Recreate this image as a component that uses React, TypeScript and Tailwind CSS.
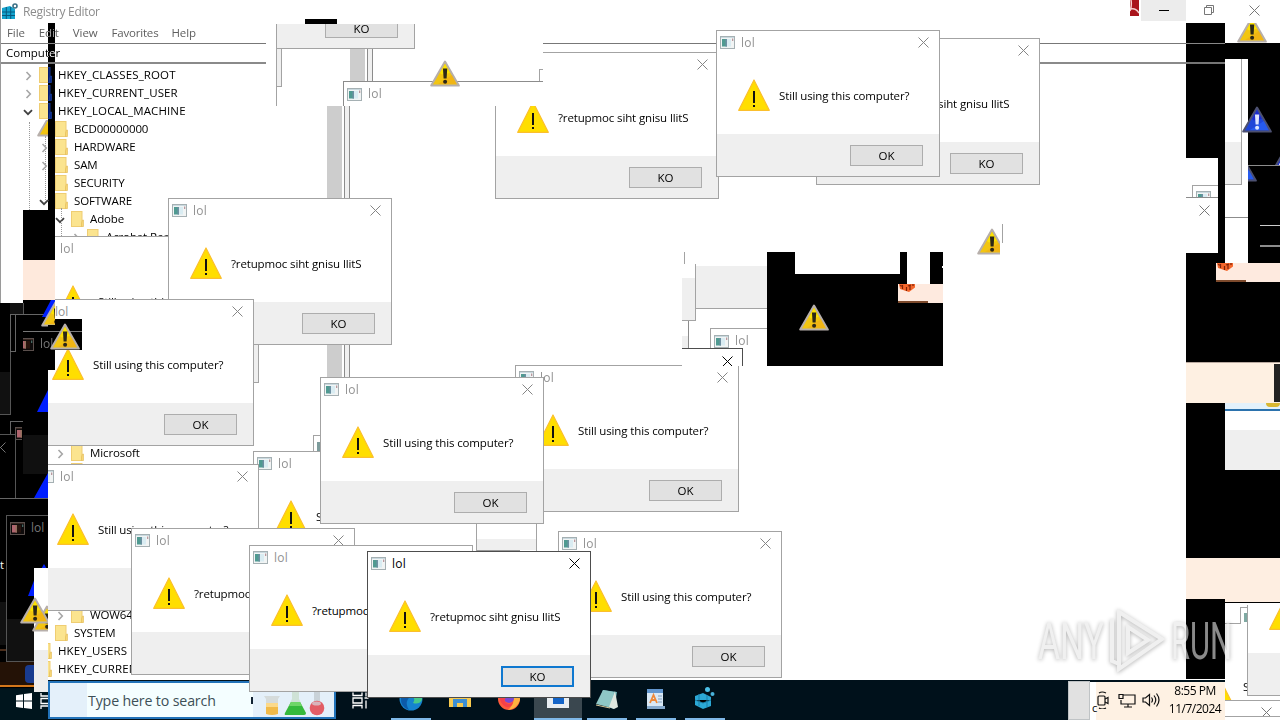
import type { ReactNode } from "react";
import { clsx } from "clsx";

const MESSAGE = "Still using this computer?";

interface DialogProps {
  /** Position classes, the dialog itself is always 224x147 */
  at: string;
  mirrored?: boolean;
  active?: boolean;
}

interface TreeItem {
  label: string;
  level: 0 | 1 | 2 | 3;
  chevron?: "open" | "closed";
  /** Extra space above the row, stands in for rows hidden by other windows */
  gap?: string;
}

const TREE: TreeItem[] = [
  { label: "HKEY_CLASSES_ROOT", level: 0, chevron: "closed" },
  { label: "HKEY_CURRENT_USER", level: 0, chevron: "closed" },
  { label: "HKEY_LOCAL_MACHINE", level: 0, chevron: "open" },
  { label: "BCD00000000", level: 1 },
  { label: "HARDWARE", level: 1, chevron: "closed" },
  { label: "SAM", level: 1, chevron: "closed" },
  { label: "SECURITY", level: 1 },
  { label: "SOFTWARE", level: 1, chevron: "open" },
  { label: "Adobe", level: 2, chevron: "open" },
  { label: "Acrobat Reader", level: 3, chevron: "closed" },
  { label: "Microsoft", level: 2, chevron: "closed", gap: "mt-[198px]" },
  { label: "", level: 2 },
  { label: "WOW6432Node", level: 2, chevron: "closed", gap: "mt-[126px]" },
  { label: "SYSTEM", level: 1 },
  { label: "HKEY_USERS", level: 0 },
  { label: "HKEY_CURRENT_CONFIG", level: 0 },
];

const INDENT = ["pl-[22px]", "pl-[38px]", "pl-[54px]", "pl-[70px]"];

const DIALOGS_BACK: DialogProps[] = [
  { at: "left-[816px] top-[38px]", mirrored: true },
  { at: "left-[495px] top-[52px]", mirrored: true },
  { at: "left-[716px] top-[30px]" },
  { at: "left-[35px] top-[236px]" },
  { at: "left-[168px] top-[198px]", mirrored: true },
  { at: "left-[30px] top-[299px]" },
  { at: "left-[253px] top-[451px]" },
  { at: "left-[35px] top-[464px]" },
  { at: "left-[515px] top-[365px]" },
  { at: "left-[320px] top-[377px]" },
  { at: "left-[558px] top-[531px]" },
];

const DIALOGS_FRONT: DialogProps[] = [
  { at: "left-[131px] top-[528px]", mirrored: true },
  { at: "left-[249px] top-[545px]", mirrored: true },
  { at: "left-[367px] top-[551px]", mirrored: true, active: true },
];

/** Plain rectangle on the desktop canvas */
function Patch({ className }: { className: string }) {
  return <div className={clsx("absolute", className)} />;
}

function AppIcon({ className, inverted }: { className?: string; inverted?: boolean }) {
  return (
    <svg viewBox="0 0 15 13" className={clsx("h-[13px] w-[15px] shrink-0", inverted && "invert", className)}>
      <rect x=".5" y=".5" width="14" height="12" fill="#f1f4f4" stroke="#a5b0b3" />
      <path d="M1 1.5h13" stroke="#c9d9df" />
      <rect x="2" y="3" width="5" height="7.5" fill="#4f9a91" />
      <rect x="5.5" y="3" width="1.5" height="7.5" fill="#6e8fa2" />
      <rect x="7" y="3" width="4" height="7.5" fill="#d9ecf2" />
      <rect x="12" y="2.5" width="1.3" height="2.5" fill="#b9979d" />
    </svg>
  );
}

function CloseIcon({ className }: { className?: string }) {
  return (
    <svg viewBox="0 0 11 11" className={clsx("h-[11px] w-[11px] shrink-0", className)} fill="none" stroke="currentColor">
      <path d="M.5.5l10 10M10.5.5l-10 10" strokeWidth="1" />
    </svg>
  );
}

/** Flat triangle shown inside the message boxes */
function AlertTriangle({ className }: { className?: string }) {
  return (
    <svg viewBox="0 0 32 32" className={clsx("h-8 w-8 shrink-0", className)}>
      <path d="M16 1L31.3 31.3H.7z" fill="#ffde00" stroke="#fbbf2d" strokeWidth="1.2" strokeLinejoin="round" />
      <rect x="15" y="12" width="2" height="12" fill="#111" />
      <rect x="15" y="26" width="2" height="2" fill="#111" />
    </svg>
  );
}

/** Glossy classic warning sign scattered over the screen */
function WarningSign({ className, blue }: { className: string; blue?: boolean }) {
  return (
    <svg viewBox="0 0 30 27" className={clsx("absolute h-[27px] w-[30px]", className)}>
      <path
        d="M15 1.5L28.8 25.6H1.2z"
        fill={blue ? "#1f46d8" : "#f2c511"}
        stroke={blue ? "#4c5070" : "#b7afab"}
        strokeWidth="2"
        strokeLinejoin="round"
      />
      <path d="M15 4l5 9-8 1.500-2-1.500z" fill={blue ? "#1d20c4" : "#fff000"} opacity=".7" />
      <path d="M22 15l4.500 9H8z" fill={blue ? "#2b6bff" : "#f0a818"} opacity=".55" />
      <path d="M13 8.500h4.200l-.6 10h-3z" fill={blue ? "#dfe6ff" : "#2b2718"} />
      <circle cx="15.100" cy="21.800" r="2" fill={blue ? "#dfe6ff" : "#2b2718"} />
    </svg>
  );
}

function Dialog({ at, mirrored, active }: DialogProps) {
  return (
    <div
      className={clsx(
        "absolute flex h-[147px] w-[224px] flex-col border bg-white",
        active ? "border-[#4d4d4d]" : "border-[#a3a3a3]",
        at
      )}
    >
      <div className="flex h-[23px] items-center pl-[3px] pr-[10px]">
        <AppIcon />
        <span
          className={clsx("ml-[6px] flex-1 leading-none tracking-[0.2px]", active ? "text-black" : "text-[#929292]")}
        >
          lol
        </span>
        <CloseIcon className={active ? "text-black" : "text-[#858585]"} />
      </div>
      <div className="flex flex-1 items-center pl-[21px] pt-[2px]">
        <AlertTriangle />
        <span className="ml-[9px] mt-px whitespace-nowrap text-[11.5px] tracking-[-0.13px]">
          {mirrored ? MESSAGE.split("").reverse().join("") : MESSAGE}
        </span>
      </div>
      <div className="flex h-[42px] items-center justify-end bg-[#efefef] pr-[16px]">
        <span
          className={clsx(
            "flex h-[21px] w-[73px] items-center justify-center bg-[#e1e1e1] pt-[2px] text-[11.5px]",
            active ? "border-2 border-[#0f78d0]" : "border border-[#adadad]"
          )}
        >
          {mirrored ? "KO" : "OK"}
        </span>
      </div>
    </div>
  );
}

function Chevron({ kind }: { kind?: "open" | "closed" }) {
  return (
    <svg viewBox="0 0 10 10" className="mt-[2px] h-[10px] w-[10px] shrink-0" fill="none">
      {kind === "closed" && <path d="M3.500 1l3.800 4-3.800 4" stroke="#a6a6a6" strokeWidth="1.600" />}
      {kind === "open" && <path d="M1 3.200l4 4 4-4" stroke="#404040" strokeWidth="1.800" />}
    </svg>
  );
}

function FolderIcon() {
  return (
    <svg viewBox="0 0 13 16" className="ml-[6px] h-[16px] w-[13px] shrink-0">
      <rect x=".5" y=".5" width="10.500" height="15" fill="#fbe48f" stroke="#efcd72" />
      <path d="M10.500 15.500V12l1-3h1v6.500z" fill="#f8d775" stroke="#e2bb58" strokeWidth=".6" />
    </svg>
  );
}

function RegistryEditor() {
  return (
    <div className="absolute left-0 top-0 h-[681px] w-[1280px] border-l border-[#9a9a9a] bg-white">
      <div className="flex h-[23px] items-center pl-[1px] text-[#8c8c8c]">
        <svg viewBox="0 0 16 17" className="h-[17px] w-[16px]">
          <path d="M0 5l8-2 5 3v10H0z" fill="#14a4cf" />
          <path d="M0 9h13M0 12.500h13M4.300 4v12M8.700 4v12" stroke="#075a80" />
          <circle cx="13" cy="3" r="2" fill="none" stroke="#3d7186" strokeWidth="1.600" />
        </svg>
        <span className="ml-[5px] pt-px tracking-[-0.3px]">Registry Editor</span>
      </div>
      <div className="flex h-[20px] items-center gap-[14px] pl-[6px] text-[11.5px] tracking-[-0.1px] text-[#5f5f5f]">
        <span>File</span>
        <span>Edit</span>
        <span>View</span>
        <span className="tracking-[-0.2px]">Favorites</span>
        <span className="-ml-px">Help</span>
      </div>
      <div className="flex h-[21px] items-center border-b-2 border-t border-b-[#8a8a8a] border-t-[#777] pl-[5px] text-[11.5px]">
        Computer
      </div>
      <div className="relative flex flex-col pt-[2px] text-[11.5px]">
        <Patch className="left-[28px] top-[58px] h-[90px] border-l border-dotted border-[#999]" />
        <Patch className="left-[44px] top-[72px] h-[64px] border-l border-dotted border-[#999]" />
        <Patch className="left-[60px] top-[144px] h-[30px] border-l border-dotted border-[#999]" />
        {TREE.map((item, i) => (
          <div key={i} className={clsx("flex h-[18px] items-center", INDENT[item.level], item.gap)}>
            <Chevron kind={item.chevron} />
            <FolderIcon />
            <span
              className={clsx(
                "ml-[6px] whitespace-nowrap",
                item.level === 0 ? "tracking-[0.12px]" : "tracking-[-0.12px]"
              )}
            >
              {item.label}
            </span>
          </div>
        ))}
      </div>
    </div>
  );
}

function WindowControls() {
  return (
    <div className="absolute left-[1130px] top-0 flex h-[21px] w-[150px] text-[#777]">
      <svg viewBox="0 0 9 16" className="mr-[2px] h-[16px] w-[9px]">
        <rect width="9" height="16" fill="#a9141b" />
        <path d="M0 11q2-5 1-11M1 9q5-1 8 4" stroke="#f5d0cf" strokeWidth="1.500" fill="none" />
      </svg>
      <div className="flex w-[45px] items-center justify-center bg-[#ececec]">
        <div className="h-px w-[10px] bg-black" />
      </div>
      <div className="flex flex-1 items-center justify-between pb-px pl-[18px] pr-[20px]">
        <svg viewBox="0 0 10 10" className="h-[10px] w-[10px]" fill="none" stroke="currentColor">
          <path d="M.5 2.500h7v7h-7zM2.500 2.500v-2h7v7h-2" />
        </svg>
        <CloseIcon />
      </div>
    </div>
  );
}

function TornTopStrip() {
  return (
    <div className="absolute left-[266px] top-[19px] h-[87px] w-[277px] overflow-hidden bg-white">
      <Patch className="left-[39px] top-0 h-[5px] w-[32px] bg-black" />
      <div className="absolute left-[10px] top-[5px] flex h-[25px] w-[139px] justify-end border-b border-l border-r border-[#a3a3a3] bg-[#efefef] pr-[16px]">
        <span className="flex h-[14px] w-[73px] items-center justify-center border border-t-0 border-[#adadad] bg-[#e1e1e1] pb-[4px] text-[11.5px] leading-none">
          KO
        </span>
      </div>
      <Patch className="left-[10px] top-[29px] h-[58px] w-px bg-[#a3a3a3]" />
      <Patch className="left-[10px] top-[29px] h-[39px] w-[6px] border border-[#a3a3a3] bg-[#efefef]" />
      <Patch className="left-[84px] top-[30px] h-[33px] w-[15px] bg-[#cdcdcd]" />
      <Patch className="left-[101px] top-[30px] h-[33px] w-[6px] border-l border-r border-[#8c8c8c] bg-[#f0f0f0]" />
      <Patch className="left-[273px] top-[50px] h-[12px] w-[5px] border-l border-t border-[#a3a3a3]" />
      <div className="absolute left-[77px] top-[62px] flex h-[25px] w-[224px] items-center border-l border-t border-[#8c8c8c] bg-white pl-[3px] text-[#929292]">
        <AppIcon />
        <span className="ml-[6px] tracking-[0.2px]">lol</span>
      </div>
      <WarningSign className="left-[164px] top-[41px]" />
    </div>
  );
}

function TornCenterBlock() {
  return (
    <div className="absolute left-[682px] top-[252px] h-[114px] w-[261px] overflow-hidden bg-white">
      <Patch className="left-[2px] top-0 h-[12px] w-px bg-[#a3a3a3]" />
      <Patch className="left-0 top-[26px] h-[43px] w-[13px] border-b border-[#a3a3a3] bg-[#efefef]" />
      <Patch className="left-[13px] top-[12px] h-[57px] w-px bg-[#a3a3a3]" />
      <Patch className="left-[14px] top-[14px] h-[43px] w-[71px] border-b border-[#a3a3a3] bg-[#efefef]" />
      <Patch className="left-0 top-[84px] h-[12px] w-[6px] bg-[#efefef]" />
      <Patch className="left-[6px] top-[69px] h-[27px] w-px bg-[#8c8c8c]" />
      <div className="absolute left-[28px] top-[76px] flex h-[30px] w-[60px] items-start border-l border-t border-[#a3a3a3] bg-white pl-[3px] pt-[6px] text-[#929292]">
        <AppIcon />
        <span className="ml-[6px] leading-[12px] tracking-[0.2px]">lol</span>
      </div>
      <div className="absolute left-0 top-[96px] flex h-[18px] w-[61px] justify-end border-r border-t border-[#4d4d4d] bg-white pr-[9px] pt-[7px]">
        <CloseIcon />
      </div>
      <Patch className="left-[61px] top-[97px] h-[17px] w-[24px] bg-white" />
      <div className="absolute left-[85px] top-0 flex h-[114px] w-[176px] items-start bg-black">
        <div className="ml-[28px] h-[22px] w-[105px] bg-white" />
        <div className="ml-[7px] h-[32px] w-[23px] bg-white" />
        <div className="ml-[12px] mt-[14px] h-[2px] w-px bg-white" />
      </div>
      <div className="absolute left-[216px] top-[32px] flex h-[19px] w-[45px] flex-col justify-between bg-[#feeadf]">
        <OrangeBlocks />
        <div className="h-[2px] w-[30px] bg-[#7d4a2c]" />
      </div>
      <WarningSign className="left-[117px] top-[52px]" />
    </div>
  );
}

function OrangeBlocks() {
  return (
    <svg viewBox="0 0 17 8" className="ml-px h-[8px] w-[17px]">
      <path d="M0 0h16v3.500l-6 4.500-9-3z" fill="#f4662b" />
      <path d="M3.500 1v4M7.500 3v4M11 1v5M14 0v2M1 1.500l3 1M9 2l3-1" stroke="#7d2208" strokeWidth="1.200" />
    </svg>
  );
}

function LeftColumn() {
  return (
    <div className="absolute left-0 top-0 h-[720px] w-[82px]">
      <WarningSign className="left-[37px] top-[110px] [clip-path:inset(10px_19px_0_0)]" />
      <div className="absolute left-[23px] top-[210px] w-[32px]">
        <div className="h-[50px] bg-black" />
        <div className="h-[40px] bg-[#fee9dc]" />
        <div className="h-[70px] bg-black" />
      </div>
      <Patch className="left-0 top-[237px] h-[66px] w-[23px] border-l border-[#9a9a9a] bg-white" />
      <Patch className="left-0 top-[303px] h-[385px] w-[48px] bg-black" />

      {/* inverted dialog edges */}
      <Patch className="left-[10px] top-[303px] h-[11px] w-[14px] border-r border-[#555] bg-[#111]" />
      <Patch className="left-[10px] top-[314px] h-[38px] w-[6px] border border-[#666]" />
      <Patch className="left-[16px] top-[314px] h-px w-[32px] bg-[#666]" />
      <Patch className="left-0 top-[372px] h-[43px] w-[11px] border-b border-r border-[#555] bg-[#111]" />
      <Patch className="left-[10px] top-[352px] h-[20px] w-px bg-[#555]" />
      <Patch className="left-[10px] top-[421px] h-[13px] w-[13px] border-l border-t border-[#666]" />
      <div className="absolute left-[15px] top-[427px] h-[13px] w-[7px] overflow-hidden">
        <AppIcon inverted />
      </div>
      <Patch className="left-0 top-[434px] h-[64px] w-[16px] border-r border-t border-[#555] bg-black" />
      <CloseIcon className="absolute left-[-5px] top-[442px] text-[#777]" />
      <Patch className="left-[23px] top-[435px] h-[39px] w-[25px] bg-[#101010]" />

      <svg viewBox="0 0 56 720" className="absolute left-0 top-0 h-[720px] w-[56px]" fill="#001fff">
        <path d="M51 300h4v5l-8 12h-5zM48 390v22H37zM48 473v25H34z" />
      </svg>
      <WarningSign className="left-[41px] top-[300px]" />
      <Patch className="left-[48px] top-[325px] h-[25px] w-[34px] bg-black" />
      <Patch className="left-[55px] top-[319px] h-[31px] w-[27px] bg-black" />
      <Patch className="left-[23px] top-[331px] h-px w-[59px] bg-[#777]" />
      <div className="absolute left-[55px] top-[300px] h-[19px] w-[28px] bg-white pt-[3px] text-[#929292]">lol</div>
      <div className="absolute left-[23px] top-[335px] flex items-center text-[#777]">
        <div className="w-[11px] overflow-hidden">
          <AppIcon inverted className="-ml-[4px]" />
        </div>
        <span className="ml-[6px]">lol</span>
      </div>
      <WarningSign className="left-[50px] top-[323px]" />

      <Patch className="left-0 top-[498px] h-px w-[48px] bg-[#666]" />
      <div className="absolute left-[6px] top-[515px] flex h-[147px] w-[42px] flex-col border-b border-l border-t border-[#555]">
        <div className="flex h-[24px] items-center gap-[6px] pl-[3px] text-[#777]">
          <AppIcon inverted />
          lol
        </div>
        <div className="mt-auto h-[42px] bg-[#111]" />
      </div>
      <svg viewBox="0 0 48 40" className="absolute left-0 top-[560px] h-[40px] w-[48px]" fill="#001fff">
        <path d="M44 4l4 7h-8zM35 18v18h-7z" />
      </svg>
      <span className="absolute left-0 top-[556px] text-[11px] text-white">t</span>
      <div className="absolute left-0 top-[602px] flex h-[86px] w-[34px] flex-col">
        <div className="h-[43px] w-[6px] bg-[#111]" />
        <div className="mt-[4px] h-[2px] w-[6px] bg-[#4a2d1b]" />
        <div className="mt-[11px] flex h-[25px] items-center justify-end border-b-2 border-[#d3771b] bg-[#241206]">
          <div className="h-[18px] w-[9px] rounded-l-sm bg-[#193b8f]" />
        </div>
      </div>
      <div className="absolute left-[34px] top-[568px] h-[124px] w-[14px] bg-white pt-[82px]">
        <div className="h-[42px] bg-[#eee]" />
      </div>
      <WarningSign className="left-[32px] top-[605px] [clip-path:inset(0_14px_0_0)]" />
      <WarningSign className="left-[20px] top-[597px] [clip-path:inset(0_2px_0_0)]" />
    </div>
  );
}

/** Horizontal slice of the torn column on the right, stacked in flow */
function Band({ className, children }: { className: string; children?: ReactNode }) {
  return <div className={clsx("w-full shrink-0", className)}>{children}</div>;
}

function RightColumn() {
  return (
    <div className="absolute left-[1186px] top-0 flex h-[720px] w-[94px] overflow-hidden">
      <div className="flex w-[39px] shrink-0 flex-col">
        <Band className="h-[158px]" />
        <Band className="h-[95px] bg-black">
          <div className="h-full w-[32px] bg-white pt-[27px] text-[#777]">
            <div className="ml-[6px] h-[12px] overflow-hidden border-l border-t border-[#a3a3a3] pl-[3px] pt-[5px]">
              <AppIcon />
            </div>
            <div className="flex justify-end border-t border-[#8c8c8c] pr-[8px] pt-[7px]">
              <CloseIcon />
            </div>
          </div>
        </Band>
        <Band className="h-[109px] bg-black" />
        <Band className="h-[41px] border-t border-[#b9a9a0] bg-[#fef0e2]" />
        <Band className="h-[155px] bg-black" />
        <Band className="h-[41px] bg-[#feeee1]" />
        <Band className="h-[80px] bg-black" />
      </div>

      <div className="flex w-[55px] shrink-0 flex-col">
        <Band className="h-[43px]" />
        <Band className="h-[16px] bg-black" />
        <Band className="flex h-[204px] bg-black">
          <div className="w-[23px] bg-white">
            <div className="flex h-[126px] w-[17px] flex-col justify-end border-b border-r border-[#a3a3a3]">
              <div className="h-[42px] bg-[#efefef]" />
            </div>
            <div className="h-[33px] border-b border-[#8c8c8c]" />
          </div>
          <div className="flex flex-1 flex-col items-end">
            <div className="mt-[106px] h-px w-full bg-[#8c8c8c]" />
            <div className="mt-[59px] h-px w-[20px] bg-[#ccc]" />
            <div className="mt-[19px] h-[2px] w-[20px] bg-[#8c8c8c]" />
          </div>
        </Band>
        <Band className="h-[99px] bg-black" />
        <Band className="flex h-[41px] justify-end border-t border-[#b9a9a0] bg-[#fef0e2] py-px">
          <div className="w-[6px] bg-[#222]" />
        </Band>
        <Band className="flex h-[8px] justify-end border-b-2 border-[#2b72ad] bg-[#e3f1fb]">
          <div className="h-[4px] w-[14px] rounded-b-full bg-[#d9b732]" />
        </Band>
        <Band className="h-[19px] bg-white" />
        <Band className="h-[40px] bg-[#efefef]" />
        <Band className="h-[88px] bg-black" />
        <Band className="h-[45px] border-b border-black bg-[#feeee1]" />
        <Band className="relative h-[117px] overflow-hidden bg-white">
          <Patch className="left-0 top-[4px] h-[17px] w-[16px] border-b border-[#a3a3a3]" />
          <Patch className="left-[15px] top-[4px] h-[16px] w-[8px] border-l border-t border-[#a3a3a3]" />
          <Patch className="left-[19px] top-[10px] h-[9px] w-[4px] bg-[#7fa9a2]" />
          <AlertTriangle className="absolute left-[-25px] top-[67px]" />
          <span className="absolute left-[18px] top-[75px] text-[11.5px]">S</span>
          <div className="absolute left-[22px] top-[2px] flex h-[91px] w-[60px] flex-col justify-end border-b border-l border-[#a3a3a3] bg-white">
            <div className="h-[42px] bg-[#efefef]" />
          </div>
          <AlertTriangle className="absolute left-[44px] top-[-5px] [clip-path:inset(7px_0_0_0)]" />
          <div className="absolute left-0 top-[97px] h-[17px] w-[55px] overflow-hidden border-b border-t border-[#a3a3a3] bg-white pl-[36px] pt-[6px] text-[#777]">
            <CloseIcon />
          </div>
        </Band>
      </div>

      <div className="absolute left-[30px] top-[263px] flex h-[19px] w-[64px] flex-col justify-between bg-[#feeadf]">
        <OrangeBlocks />
        <div className="h-[2px] w-[30px] bg-[#7d4a2c]" />
      </div>
      <WarningSign className="left-[51px] top-[16px] [clip-path:inset(7px_0_0_0)]" />
      <WarningSign blue className="left-[56px] top-[106px]" />
      <WarningSign blue className="left-[80px] top-[155px] [clip-path:inset(0_0_17px_0)]" />
      <WarningSign blue className="left-[41px] top-[155px] [clip-path:inset(11px_0_0_21px)]" />
    </div>
  );
}

function Flasks() {
  return (
    <svg viewBox="0 0 62 29" className="ml-[10px] mt-[5px] h-[29px] w-[62px] self-start">
      <path d="M1 8h16l-2 3v15H3V11z" fill="#d5dbdb" />
      <path d="M3 15h12v11q-6 2-12 0z" fill="#f1ba48" />
      <path d="M3 15h12v4H3z" fill="#fbd98a" />
      <path d="M29 1h7v10l7 14q0 2-2 2H23q-2 0-1-2l7-14z" fill="#cfe2d6" />
      <path d="M28 14h9l6 11q0 2-2 2H23q-2 0-1-2z" fill="#35b93c" />
      <path d="M28 14h9l2 4H26z" fill="#6fd668" />
      <path d="M51 1h6v12h-6z" fill="#c9d2d8" />
      <circle cx="54" cy="20" r="7.300" fill="#e25d66" />
      <ellipse cx="53.500" cy="15.500" rx="4.500" ry="2" fill="#d8b4bb" />
    </svg>
  );
}

function TaskViewIcon({ className }: { className?: string }) {
  return (
    <svg viewBox="0 0 17 16" className={className} fill="none" stroke="#fff" strokeWidth="1.300">
      <path d="M1 0v3h9V0M1 5.500h9v5H1zM1 16v-3h9v3M14 0v4M14 8v8M12.500 5.500h4" />
    </svg>
  );
}

function TaskSlot({ running, focused, children }: { running?: boolean; focused?: boolean; children: ReactNode }) {
  return (
    <div className={clsx("flex h-[40px] w-[48px] flex-col items-center", focused && "bg-[#3a474f]")}>
      <div className="flex flex-1 items-center">{children}</div>
      <div className={clsx("h-[2px]", focused ? "w-full" : "w-[40px]", running && "bg-[#7fb8e8]")} />
    </div>
  );
}

function TaskSlots() {
  return (
    <div className="ml-[18px] flex gap-px">
      <TaskSlot running>
        <svg viewBox="0 0 24 24" className="h-[24px] w-[24px]">
          <circle cx="12" cy="12" r="11.500" fill="#1583cf" />
          <path d="M11 1q13 0 12 12-3 5-9 3 3-4-1-7-5-3-11 1 2-8 9-9z" fill="#46c98b" />
          <path d="M2 10q-1 10 8 13-4-6-1-11 2-3 5-2-4-4-12 0z" fill="#0c5aa9" />
        </svg>
      </TaskSlot>
      <TaskSlot>
        <svg viewBox="0 0 22 18" className="h-[18px] w-[22px]">
          <path d="M0 1h8l2 2h12v14H0z" fill="#f8ca4f" />
          <path d="M4 9h14v8h-4v-4H8v4H4z" fill="#3d8fd4" />
        </svg>
      </TaskSlot>
      <TaskSlot>
        <svg viewBox="0 0 24 24" className="h-[24px] w-[24px]">
          <circle cx="12" cy="12" r="11" fill="#ff5a3c" />
          <path d="M14 1q10 3 9 12-3 9-12 10Q21 14 14 1z" fill="#ffb13f" />
          <circle cx="12" cy="11" r="5" fill="#7b47d3" />
          <path d="M2 6q8-1 10 4-6 1-4 5 4 4 8 0-1 6-7 5-7-4-7-14z" fill="#f5404a" />
        </svg>
      </TaskSlot>
      <TaskSlot running focused>
        <svg viewBox="0 0 22 18" className="h-[18px] w-[22px]">
          <rect width="22" height="18" fill="#e8edf2" />
          <rect x="6" y="3" width="11" height="11" fill="#1464c8" />
          <path d="M1 3.500h20" stroke="#9eb2c5" />
        </svg>
      </TaskSlot>
      <TaskSlot running>
        <svg viewBox="0 0 24 24" className="h-[24px] w-[24px]">
          <path d="M8 3l14 2-3 17-16-5z" fill="#6fb4b8" />
          <path d="M8 3l11 2-4 15L1 17z" fill="#8fc7c6" />
          <path d="M20 4l3 16-4 2-5-2z" fill="#dfe6df" />
          <path d="M1 18l14 3" stroke="#d9c79a" />
        </svg>
      </TaskSlot>
      <TaskSlot running>
        <svg viewBox="0 0 20 22" className="h-[22px] w-[20px]">
          <path d="M1 1h16v17h2v3H1z" fill="#d9e8f5" />
          <path d="M1 1h16v4H1z" fill="#6296cf" />
          <path d="M4 15l3.500-8 3.500 8M5.500 12h4" stroke="#ee8838" strokeWidth="1.800" fill="none" />
          <path d="M12 8h4M12 11h4M12 14h4" stroke="#809ebd" />
          <path d="M1 18h18v3H1z" fill="#86aacd" />
        </svg>
      </TaskSlot>
      <TaskSlot running>
        <svg viewBox="0 0 20 22" className="mb-[2px] h-[22px] w-[20px]">
          <path d="M0 9l8-3 8 4v9l-8 3-8-4z" fill="#2ba8d6" />
          <path d="M0 13l8 3 8-3M4 7v12M12 8v12" stroke="#1a7fa9" />
          <circle cx="12.500" cy="2.500" r="2.500" fill="#4bc0e8" />
          <circle cx="17.500" cy="7" r="2" fill="#49b3dc" />
        </svg>
      </TaskSlot>
    </div>
  );
}

function Taskbar() {
  return (
    <div className="absolute left-0 top-[680px] flex h-[40px] w-[1225px] bg-[#00111b]">
      <div className="w-[48px] shrink-0 overflow-hidden pt-[9px]">
        <div className="flex h-[31px] items-start gap-[8px] bg-[#00151d] pl-[16px] pt-[4px]">
          <svg viewBox="0 0 16 16" className="h-[16px] w-[16px] shrink-0" fill="#fff">
            <path d="M0 2.200l7-1v6.400H0zM8 1l8-1v7.600H8zM0 8.600h7v6.300l-7-1zM8 8.600h8V16l-8-1z" />
          </svg>
          <TaskViewIcon className="h-[16px] w-[17px] shrink-0" />
        </div>
      </div>
      <div className="mt-[1px] flex h-[38px] w-[288px] shrink-0 items-center border-2 border-[#2273b9] bg-[#e4f0fa] pl-[37px] text-[14.2px] text-[#3d5057]">
        <span className="flex h-full w-[166px] items-center justify-between bg-[#f4feff] pl-px pt-px tracking-[-0.15px]">
          Type here to search
          <i className="h-[7px] w-[2px] bg-[#123]" />
        </span>
        <Flasks />
      </div>
      <div className="flex w-[732px] shrink-0 items-center pl-[16px]">
        <TaskViewIcon className="h-[17px] w-[17px]" />
        <TaskSlots />
      </div>
      <div className="mt-[1px] h-[39px] w-[22px] shrink-0 border border-[#bfc3c5] bg-[#e1e1e1]" />
      <div className="mt-[2px] flex flex-1 bg-[#fef1e3] text-black">
        <div className="flex w-[6px] shrink-0 items-end bg-white pb-[3px] pl-[2px] text-[11px]">c</div>
        <svg viewBox="0 0 64 18" className="ml-px mt-[9px] h-[18px] w-[64px] shrink-0" fill="none" stroke="#111" strokeWidth="1.200">
          <rect x="1" y="5" width="7" height="9" rx="1" />
          <path d="M8 8l3-1.500v6L8 11M2 2q3-2 7 0M2 17q3 2 7 0" />
          <path d="M26 4h12v9H24V9M31 13v3M27 16h8M22 3.500h4v4h-4z" />
          <path d="M46 7h2.500l4-3.500v11L48.500 11H46zM54.500 6.500q2 2.500 0 5M57 4.500q3.500 4.500 0 9M59.500 2.500q5 6.500 0 13" />
        </svg>
        <div className="ml-auto flex w-[60px] shrink-0 flex-col items-center text-[12px] leading-[18px] tracking-[-0.5px]">
          <span>8:55 PM</span>
          <span>11/7/2024</span>
        </div>
      </div>
    </div>
  );
}

function Watermark() {
  return (
    <svg
      viewBox="0 0 196 66"
      className="absolute left-[1037px] top-[607px] h-[66px] w-[196px] opacity-60 drop-shadow-[0_1px_2px_rgba(0,0,0,0.5)]"
      fill="#e6e6e6"
    >
      <text x="1" y="52" fontFamily="Roboto" fontSize="51" textLength="66" lengthAdjust="spacingAndGlyphs">
        ANY
      </text>
      <text x="134" y="52" fontFamily="Roboto" fontSize="51" textLength="61" lengthAdjust="spacingAndGlyphs">
        RUN
      </text>
      <path
        d="M75 12v42l7 3V12M82 5l43 27-43 30V5zM91 20v26l20-13z"
        fill="none"
        stroke="#e6e6e6"
        strokeWidth="4"
      />
    </svg>
  );
}

export default function App() {
  return (
    <div className="relative h-[720px] w-[1280px] overflow-hidden bg-white font-['Open_Sans','Noto_Sans',sans-serif] text-[12px] leading-[18px] text-black">
      <RegistryEditor />
      <div className="absolute left-[48px] top-[23px] h-[187px] w-[7px] bg-white mix-blend-difference" />
      <div className="absolute left-[1186px] top-[23px] h-[135px] w-[39px] bg-white mix-blend-difference" />
      <WindowControls />

      {/* list scrollbar and pane splitter */}
      <div className="absolute left-[327px] top-[106px] flex h-[300px] gap-[2px]">
        <div className="w-[15px] bg-[#cdcdcd]" />
        <div className="w-[6px] border-l border-r border-[#8c8c8c] bg-[#f0f0f0]" />
      </div>
      <Patch className="left-[253px] top-[344px] h-[39px] w-[6px] border-b border-r border-[#a3a3a3] bg-[#efefef]" />
      <Patch className="left-[313px] top-[435px] h-[16px] w-[8px] border-l border-t border-[#a3a3a3]" />
      <Patch className="left-[317px] top-[442px] h-[9px] w-[4px] bg-[#7d9c9c]" />
      <div className="absolute left-[476px] top-[510px] flex h-[45px] w-[61px] flex-col border-l border-r border-[#a3a3a3] bg-white pt-[29px]">
        <div className="h-[11px] bg-[#efefef]" />
        <div className="h-px w-[43px] bg-[#999]" />
      </div>

      {DIALOGS_BACK.map((dialog) => (
        <Dialog key={dialog.at} {...dialog} />
      ))}

      <TornTopStrip />
      <TornCenterBlock />
      <WarningSign className="left-[977px] top-[228px] [clip-path:inset(0_7px_0_0)]" />
      <Patch className="left-[1002px] top-[224px] h-[19px] w-px bg-[#a3a3a3]" />

      <Taskbar />
      <LeftColumn />
      <RightColumn />
      {DIALOGS_FRONT.map((dialog) => (
        <Dialog key={dialog.at} {...dialog} />
      ))}
      <Watermark />
    </div>
  );
}
